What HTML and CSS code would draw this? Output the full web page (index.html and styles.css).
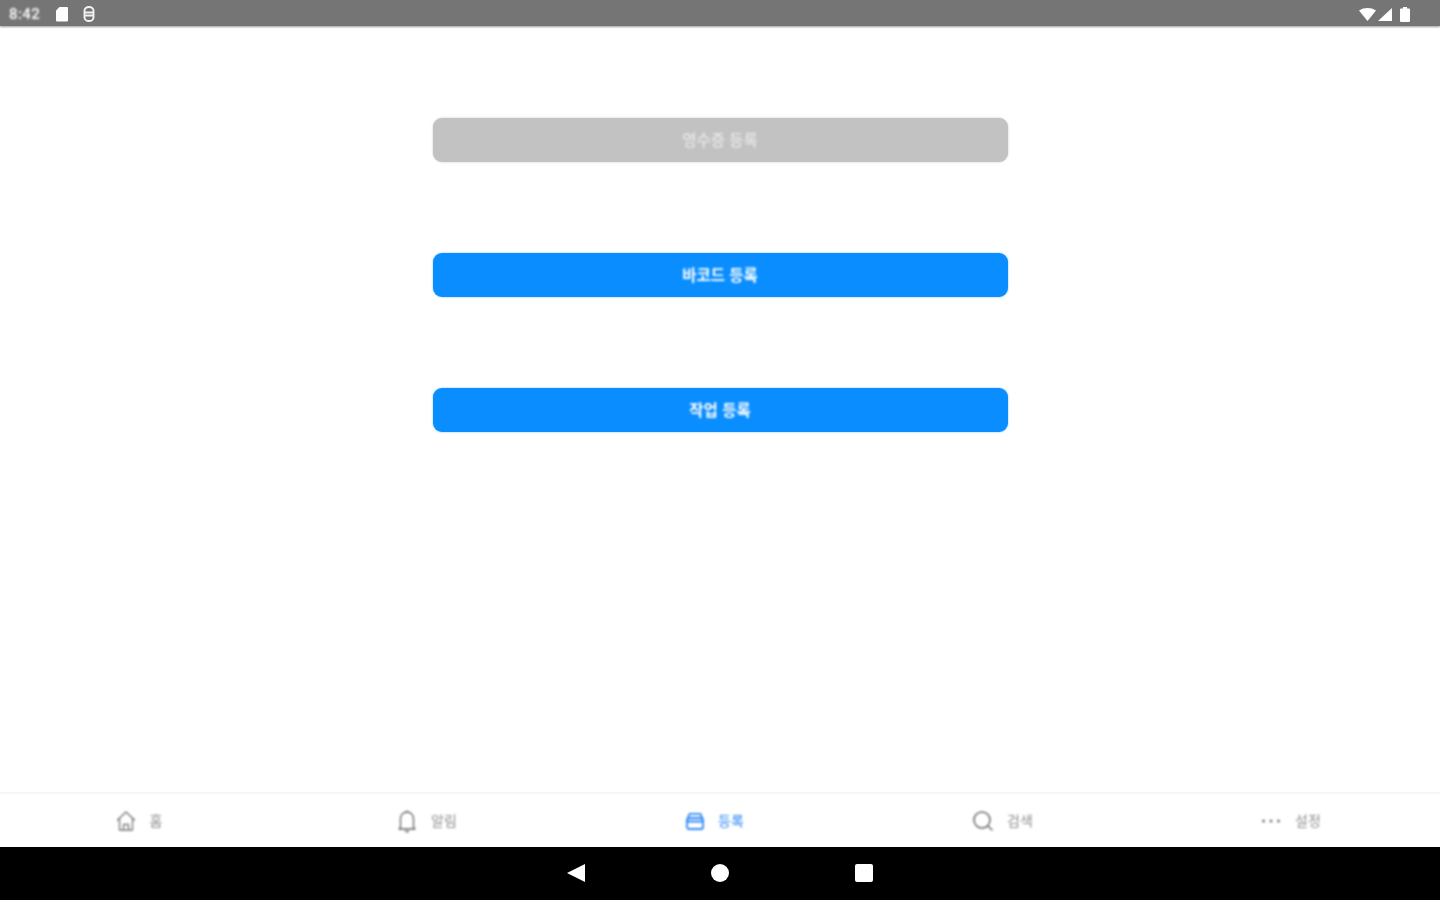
FILE: index.html
```html
<!DOCTYPE html>
<html lang="ko">
<head>
<meta charset="utf-8">
<title>등록</title>
<link rel="stylesheet" href="styles.css">
</head>
<body>
<div class="screen">
  <header class="status">
    <div class="status-group">
      <span class="clock">8:42</span>
      <svg class="st-icon" width="14" height="16" viewBox="0 0 14 16"><path d="M4.500 1H12a1 1 0 0 1 1 1v12.500a1 1 0 0 1-1 1H2a1 1 0 0 1-1-1V4.500z" fill="#fff"/></svg>
      <svg class="st-icon st-gap" width="12" height="16" viewBox="0 0 12 16"><path d="M1.500 4.500a4.500 3.500 0 0 1 9 0v7a4.500 3.500 0 0 1-9 0zM1.500 6.500h9M1.500 9.500h9" fill="none" stroke="#f2f2f2" stroke-width="1.900"/></svg>
    </div>
    <div class="status-group right">
      <svg width="17" height="13" viewBox="0 0 17 13"><path d="M0 2.500C5-.8 12-.8 17 2.500L8.500 13z" fill="#fff"/></svg>
      <svg width="15" height="13" viewBox="0 0 15 13"><path d="M15 0v13H1z" fill="#fff"/></svg>
      <svg class="batt" width="10" height="15" viewBox="0 0 10 15"><path d="M3 0h4v1.500h2a1 1 0 0 1 1 1V14a1 1 0 0 1-1 1H1a1 1 0 0 1-1-1V2.500a1 1 0 0 1 1-1h2z" fill="#fff"/></svg>
    </div>
  </header>

  <main class="content">
    <button class="action disabled" type="button"><span class="soft">영수증 등록</span></button>
    <button class="action" type="button"><span class="soft">바코드 등록</span></button>
    <button class="action" type="button"><span class="soft">작업 등록</span></button>
  </main>

  <nav class="tabs">
    <div class="tab">
      <svg class="tab-icon" width="22" height="22" viewBox="0 0 22 22" fill="none" stroke="#777" stroke-width="1.300" stroke-linejoin="round"><path d="M2 10.500 11 2l9 8.500M4.500 8.500V20h13V8.500"/><path d="M8.500 20v-5.500h5V20"/></svg>
      <span class="label soft">홈</span>
    </div>
    <div class="tab">
      <svg class="tab-icon" width="22" height="24" viewBox="0 0 22 24" fill="none" stroke="#666" stroke-width="1.300" stroke-linejoin="round"><path d="M4.500 18.500V9.500a6.500 6.500 0 0 1 13 0v9l1.500 1.500H3zM9 22.500h4M11 1.500v1.500"/></svg>
      <span class="label soft">알림</span>
    </div>
    <div class="tab active">
      <svg class="tab-icon" width="20" height="20" viewBox="0 0 20 20" fill="none" stroke="#2b87f5" stroke-width="1.800" stroke-linejoin="round"><rect x="2" y="7" width="16" height="11" rx="2"/><path d="M2 9.500 4.500 2.800h11L18 9.500M2 10.500h16"/></svg>
      <span class="label soft">등록</span>
    </div>
    <div class="tab">
      <svg class="tab-icon" width="22" height="22" viewBox="0 0 22 22" fill="none" stroke="#666" stroke-width="1.500" stroke-linecap="round"><circle cx="10" cy="10" r="8"/><path d="m16 16 4 4"/></svg>
      <span class="label soft">검색</span>
    </div>
    <div class="tab">
      <svg class="tab-icon" width="22" height="6" viewBox="0 0 22 6" fill="#777"><circle cx="3.500" cy="3" r="1.500"/><circle cx="11" cy="3" r="1.500"/><circle cx="18.500" cy="3" r="1.500"/></svg>
      <span class="label soft">설정</span>
    </div>
  </nav>

  <footer class="sysnav">
    <svg width="20" height="20" viewBox="0 0 20 20"><path d="M19 1v18L1 10z" fill="#fff"/></svg>
    <svg width="20" height="20" viewBox="0 0 20 20"><circle cx="10" cy="10" r="9" fill="#fff"/></svg>
    <svg width="20" height="20" viewBox="0 0 20 20"><rect x="1" y="1" width="18" height="18" rx="2" fill="#fff"/></svg>
  </footer>
</div>
</body>
</html>
```
FILE: styles.css
```css
* { box-sizing: border-box; }
html, body { margin: 0; height: 100%; }
body { font-family: "Noto Sans CJK KR", "Noto Sans", sans-serif; background: #fff; }

.screen { width: 1440px; height: 900px; display: flex; flex-direction: column; overflow: hidden; }

.status {
  height: 26px;
  flex: none;
  background: #757575;
  box-shadow: 0 1px 2px rgba(0, 0, 0, .4);
  display: flex;
  align-items: center;
  justify-content: space-between;
  padding: 2px 30px 0 9px;
  position: relative;
}
.status-group { display: flex; align-items: center; }
.status-group svg { filter: blur(.7px); }
.status-group.right { gap: 1px; }
.clock { color: #fff; font: 500 15px "Roboto", sans-serif; letter-spacing: .4px; width: 46px; filter: blur(.9px); }
.st-gap { margin-left: 14px; }
.batt { margin-left: 7px; }

.content {
  flex: 1;
  display: flex;
  flex-direction: column;
  align-items: center;
  gap: 91px;
  padding-top: 92px;
}
.action {
  width: 575px;
  height: 44px;
  flex: none;
  border: 0;
  border-radius: 9px;
  background: #0a8eff;
  color: #fff;
  font-family: inherit;
  font-size: 15.500px;
  font-weight: 700;
  padding: 0 0 3px;
  box-shadow: 0 0 2px rgba(10, 142, 255, .6);
}
.action.disabled { background: #c2c2c2; color: #e8e8e8; font-weight: 500; box-shadow: 0 0 2px rgba(150, 150, 150, .6); }
.soft { display: inline-block; filter: blur(.9px); }

.tabs {
  height: 55px;
  flex: none;
  display: grid;
  grid-template-columns: repeat(5, 1fr);
  border-top: 2px solid #f6f6f6;
}
.tab {
  display: flex;
  align-items: center;
  justify-content: center;
  gap: 13px;
  padding: 1px 11px 0 0;
  color: #8e8e8e;
}
.tab.active { color: #2b87f5; }
.tab-icon { filter: blur(.8px); flex: none; }
.label { font-size: 14px; line-height: 16px; margin-bottom: 2px; }

.sysnav {
  height: 53px;
  flex: none;
  background: #000;
  display: flex;
  align-items: center;
  justify-content: center;
  gap: 124px;
  padding-bottom: 1px;
}
.sysnav svg { filter: blur(.5px); }
```
